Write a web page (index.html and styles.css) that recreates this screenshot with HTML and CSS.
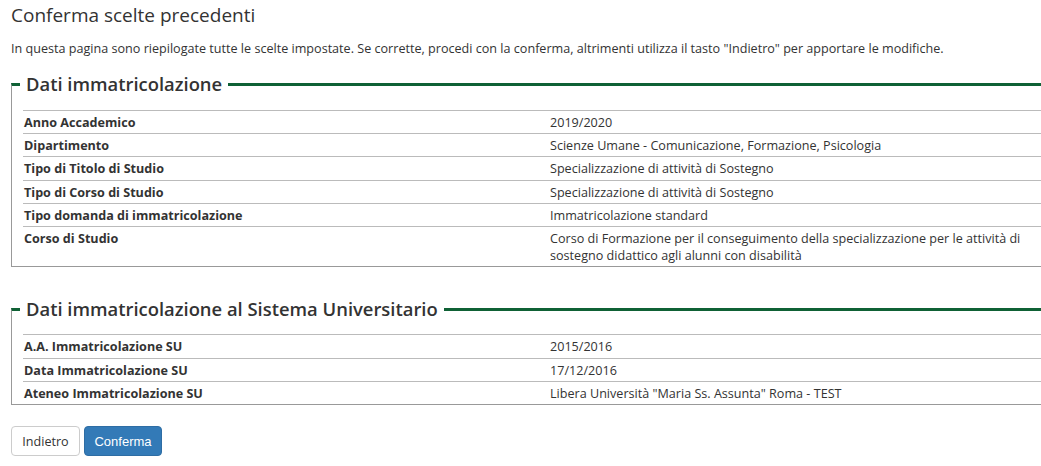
FILE: index.html
```html
<!DOCTYPE html>
<html lang="it">
<head>
    <meta charset="UTF-8">
    <title>Conferma scelte precedenti</title>
    <link rel="stylesheet" href="styles.css">
</head>
<body>
    <h1 class="page-title">Conferma scelte precedenti</h1>
    <p class="intro">In questa pagina sono riepilogate tutte le scelte impostate. Se corrette, procedi con la conferma, altrimenti utilizza il tasto "Indietro" per apportare le modifiche.</p>

    <fieldset class="box">
        <legend>Dati immatricolazione</legend>
        <table class="detail-table">
            <tr><th>Anno Accademico</th><td>2019/2020</td></tr>
            <tr><th>Dipartimento</th><td>Scienze Umane - Comunicazione, Formazione, Psicologia</td></tr>
            <tr><th>Tipo di Titolo di Studio</th><td>Specializzazione di attività di Sostegno</td></tr>
            <tr><th>Tipo di Corso di Studio</th><td>Specializzazione di attività di Sostegno</td></tr>
            <tr><th>Tipo domanda di immatricolazione</th><td>Immatricolazione standard</td></tr>
            <tr><th>Corso di Studio</th><td>Corso di Formazione per il conseguimento della specializzazione per le attività di sostegno didattico agli alunni con disabilità</td></tr>
        </table>
    </fieldset>

    <fieldset class="box second">
        <legend>Dati immatricolazione al Sistema Universitario</legend>
        <table class="detail-table">
            <tr><th>A.A. Immatricolazione SU</th><td>2015/2016</td></tr>
            <tr><th>Data Immatricolazione SU</th><td>17/12/2016</td></tr>
            <tr><th>Ateneo Immatricolazione SU</th><td>Libera Università "Maria Ss. Assunta" Roma - TEST</td></tr>
        </table>
    </fieldset>

    <div class="actions">
        <button class="btn btn-default">Indietro</button>
        <button class="btn btn-primary">Conferma</button>
    </div>
</body>
</html>
```

FILE: styles.css
```css
* {
    box-sizing: border-box;
}

body {
    margin: 0;
    padding: 0 0 0 11px;
    font-family: 'Open Sans', 'DejaVu Sans', sans-serif;
    font-size: 12.6px;
    color: #333;
    background: #fff;
    overflow: hidden;
}

.page-title {
    margin: 0;
    padding-top: 2px;
    font-size: 19px;
    font-weight: 400;
    line-height: 26px;
    color: #333;
}

.intro {
    margin: 12px 0 0;
    line-height: 18px;
}

.box {
    margin: 13px 0 0;
    padding: 0 0 0 11px;
    min-width: 0;
    border: none;
    border-top: 3px solid #0f6135;
    border-left: 1px solid #999;
    border-bottom: 1px solid #999;
}

.box.second {
    margin-top: 29px;
}

.box legend {
    margin-left: -3px;
    padding: 0 6px;
    font-size: 18.4px;
    font-weight: 600;
    line-height: 26px;
    color: #333;
}

.detail-table {
    width: 100%;
    margin-top: 13px;
    border-collapse: collapse;
}

.box.second .detail-table {
    margin-top: 12px;
}

.detail-table th,
.detail-table td {
    padding: 3px 1px 2px;
    border-top: 1px solid #bbb;
    text-align: left;
    vertical-align: top;
    line-height: 17.2px;
}

.detail-table th {
    width: 526px;
    font-weight: 700;
}

.actions {
    display: flex;
    gap: 4px;
    margin-top: 21px;
}

.btn {
    height: 30px;
    border: 1px solid #ccc;
    border-radius: 4px;
    font-size: 12.6px;
    cursor: pointer;
}

.btn-default {
    width: 69px;
    background: #fff;
    color: #333;
    font-family: 'Open Sans', sans-serif;
}

.btn-primary {
    width: 78px;
    background: #337ab7;
    border-color: #2e6da4;
    color: #fff;
    font-family: 'Liberation Sans', Arial, sans-serif;
    font-size: 13px;
}
```
